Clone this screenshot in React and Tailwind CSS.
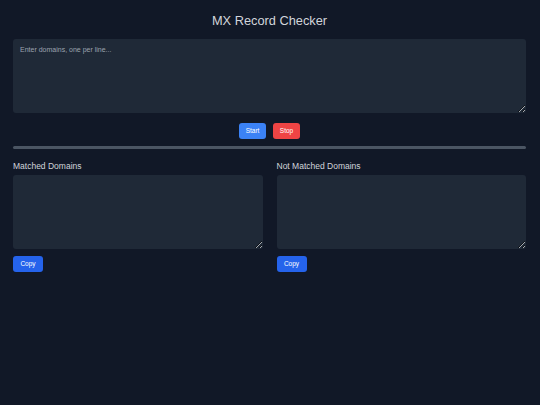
import React from "react";

export default function App() {
  return (
    <div className="min-h-[405px] w-full bg-[#111827] pl-[13px] pr-[14px] font-['Liberation_Sans',Arial,sans-serif]">
      <h1 className="pt-[12px] text-center text-[12.8px] leading-[18px] text-[#d1d5db]">MX Record Checker</h1>
      <textarea
        className="mt-[9px] block h-[74px] w-full rounded-[3px] bg-[#1f2937] px-[7px] py-[6px] text-[7px] text-gray-300 placeholder:text-[#9ca3af] outline-none"
        placeholder="Enter domains, one per line..."
      />
      <div className="mt-[10px] flex justify-center gap-[7px]">
        <button className="h-[16px] w-[27px] rounded-[3px] bg-[#3b82f6] text-[6.5px] text-white">Start</button>
        <button className="h-[16px] w-[27px] rounded-[3px] bg-[#ef4444] text-[6.5px] text-white">Stop</button>
      </div>
      <div className="mt-[7px] h-[3px] w-full rounded-full bg-[#4b5563]" />
      <div className="mt-[11px] grid grid-cols-2 gap-[14px]">
        {["Matched Domains", "Not Matched Domains"].map((label) => (
          <div key={label}>
            <div className="text-[8.5px] leading-[12px] text-[#d1d5db]">{label}</div>
            <textarea className="mt-[3px] block h-[74px] w-full rounded-[3px] bg-[#1f2937] outline-none" />
            <button className="mt-[7px] h-[16px] w-[30px] rounded-[3px] bg-[#2563eb] text-[6.5px] text-white">Copy</button>
          </div>
        ))}
      </div>
    </div>
  );
}
